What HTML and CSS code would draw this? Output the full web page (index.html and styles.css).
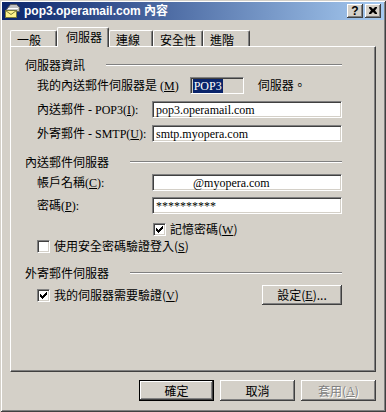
FILE: index.html
```html
<!DOCTYPE html>
<html lang="zh-Hant">
<head>
  <meta charset="UTF-8" />
  <title>pop3.operamail.com 內容</title>
  <link rel="stylesheet" href="styles.css">
</head>
<body>

<div class="window">
  <div class="titlebar">
    <svg class="title-icon" width="16" height="16" viewBox="0 0 16 16">
      <path d="M2.5 6.5 L6.5 1.5 H12.5 L15.5 4.5 V8.5 H2.5 Z" fill="#c0c0c0" stroke="#5a5a5a"/>
      <path d="M4 5.5 H14" stroke="#ffffff"/>
      <rect x="1.5" y="7.5" width="11" height="7" fill="#fff38a" stroke="#7a7a3a"/>
      <path d="M1.5 7.5 L7 11.5 L12.5 7.5" fill="none" stroke="#7a7a3a"/>
    </svg>
    <span class="title-text">pop3.operamail.com 內容</span>
    <div class="cap-btns">
      <span class="cap-btn help">?</span>
      <span class="cap-btn">
        <svg width="8" height="7" viewBox="0 0 8 7">
          <path d="M0 0h2l2 2 2-2h2v1l-2 2.5 2 2.5v1h-2l-2-2-2 2h-2v-1l2-2.5-2-2.5z" fill="#000"/>
        </svg>
      </span>
    </div>
  </div>

  <div class="tabs">
    <div class="tab w47">一般</div>
    <div class="tab selected">伺服器</div>
    <div class="tab w44">連線</div>
    <div class="tab w50">安全性</div>
    <div class="tab w47">進階</div>
  </div>

  <div class="panel">
    <div class="group-head">
      <span>伺服器資訊</span>
      <span class="etch"></span>
    </div>
    <div class="row r1">
      <span class="text">我的內送郵件伺服器是 (<u>M</u>)</span>
      <span class="readonly"><span class="sel">POP3</span></span>
      <span class="text after">伺服器。</span>
    </div>
    <div class="row r2">
      <span class="label">內送郵件 - POP3(<u>I</u>):</span>
      <div class="edit">pop3.operamail.com</div>
    </div>
    <div class="row r2">
      <span class="label">外寄郵件 - SMTP(<u>U</u>):</span>
      <div class="edit">smtp.myopera.com</div>
    </div>

    <div class="group-head g2">
      <span>內送郵件伺服器</span>
      <span class="etch"></span>
    </div>
    <div class="row r4">
      <span class="label">帳戶名稱(<u>C</u>):</span>
      <div class="edit user">@myopera.com</div>
    </div>
    <div class="row r5">
      <span class="label">密碼(<u>P</u>):</span>
      <div class="edit">**********</div>
    </div>
    <div class="check-row remember">
      <span class="box checked"></span>
      <span>記憶密碼(<u>W</u>)</span>
    </div>
    <div class="check-row spa">
      <span class="box"></span>
      <span>使用安全密碼驗證登入(<u>S</u>)</span>
    </div>

    <div class="group-head g2">
      <span>外寄郵件伺服器</span>
      <span class="etch"></span>
    </div>
    <div class="check-row auth">
      <span class="box checked"></span>
      <span>我的伺服器需要驗證(<u>V</u>)</span>
      <span class="btn settings">設定(<u>E</u>)...</span>
    </div>
  </div>

  <div class="actions">
    <span class="btn default">確定</span>
    <span class="btn">取消</span>
    <span class="btn disabled">套用(<u>A</u>)</span>
  </div>
</div>

</body>
</html>
```

FILE: styles.css
```css
:root {
  --face: #d4d0c8;
  --shadow: #808080;
  --dark: #404040;
  --light: #ffffff;
}

* {
  box-sizing: border-box;
}

body {
  margin: 0;
  background: var(--face);
  font-family: "Liberation Serif", "Noto Sans CJK TC", serif;
  font-size: 12px;
  line-height: 14px;
  color: #000;
}

u {
  text-decoration: underline;
  text-underline-offset: 1px;
}

.window {
  width: 386px;
  height: 412px;
  padding: 2px;
  background: var(--face);
  box-shadow: inset 1px 1px var(--face), inset -1px -1px var(--dark),
              inset 2px 2px var(--light), inset -2px -2px var(--shadow);
  display: flex;
  flex-direction: column;
}

/* caption */
.titlebar {
  height: 18px;
  background: linear-gradient(to right, #0a246a, #a6caf0);
  display: flex;
  align-items: center;
  color: #fff;
}

.title-icon {
  margin-left: 2px;
  flex: none;
}

.title-text {
  flex: 1;
  margin-left: 4px;
  font-family: "Liberation Sans", "Noto Sans CJK TC", sans-serif;
  font-weight: bold;
  font-size: 12px;
}

.cap-btns {
  display: flex;
  gap: 2px;
  margin-right: 3px;
}

.cap-btn {
  width: 16px;
  height: 14px;
  background: var(--face);
  box-shadow: inset -1px -1px var(--dark), inset 1px 1px var(--light),
              inset -2px -2px var(--shadow);
  display: flex;
  align-items: center;
  justify-content: center;
  color: #000;
}

.cap-btn svg {
  margin-top: -1px;
}

.cap-btn.help {
  font-family: "Liberation Sans", sans-serif;
  font-weight: bold;
  font-size: 12px;
  line-height: 12px;
}

/* tabs */
.tabs {
  display: flex;
  align-items: flex-end;
  height: 19px;
  margin: 7px 0 0 8px;
  position: relative;
  z-index: 1;
}

.tab {
  height: 16px;
  padding: 2px 0 0 6px;
  background: var(--face);
  border-top: 1px solid var(--light);
  border-left: 1px solid var(--light);
  border-right: 1px solid var(--dark);
  box-shadow: inset -1px 0 var(--shadow);
  border-radius: 2px 2px 0 0;
  font-family: "Noto Sans CJK TC", sans-serif;
}

.tab.w47 { width: 47px; }
.tab.w44 { width: 44px; }
.tab.w50 { width: 50px; }

.tab.selected {
  width: 52px;
  height: 20px;
  margin-bottom: -1px;
  padding: 2px 0 0 8px;
}

/* property page */
.panel {
  height: 326px;
  margin: 0 8px;
  padding: 11px 33px 0 14px;
  border-top: 1px solid var(--light);
  border-left: 1px solid var(--light);
  border-right: 1px solid var(--dark);
  border-bottom: 1px solid var(--dark);
  box-shadow: inset -1px -1px var(--shadow);
}

.group-head {
  display: flex;
  align-items: center;
  gap: 21px;
  height: 14px;
  font-family: "Noto Sans CJK TC", sans-serif;
}

.group-head.g2 {
  margin-top: 13px;
}

.etch {
  flex: 1;
  height: 2px;
  border-top: 1px solid var(--shadow);
  border-bottom: 1px solid var(--light);
}

.row {
  display: flex;
  align-items: center;
  height: 17px;
  padding-left: 12px;
}

.row.r1 { margin-top: 5px; }
.row.r2 { margin-top: 7px; }
.row.r4 { margin-top: 5px; }
.row.r5 { margin-top: 6px; }

.label {
  width: 115px;
  flex: none;
}

.text.after {
  margin-left: 14px;
}

.edit,
.readonly {
  height: 17px;
  padding: 1px 0 0 3px;
  border-top: 1px solid var(--shadow);
  border-left: 1px solid var(--shadow);
  border-right: 1px solid var(--light);
  border-bottom: 1px solid var(--light);
  box-shadow: inset 1px 1px var(--dark), inset -1px -1px var(--face);
  white-space: pre;
}

.edit {
  width: 190px;
  background: #fff;
}

.edit.user {
  padding-left: 40px;
}

.readonly {
  width: 54px;
  margin-left: 11px;
  background: var(--face);
  padding-left: 2px;
}

.sel {
  background: #0a246a;
  color: #fff;
  padding: 0 1px;
}

/* checkboxes */
.check-row {
  display: flex;
  align-items: center;
  gap: 4px;
  height: 13px;
  padding-left: 12px;
  font-family: "Noto Sans CJK TC", sans-serif;
}

.check-row u {
  font-family: "Liberation Serif", serif;
}

.check-row.remember {
  margin-top: 9px;
  padding-left: 128px;
}

.check-row.spa {
  margin-top: 4px;
}

.check-row.auth {
  height: 20px;
  margin-top: 5px;
}

.box {
  width: 13px;
  height: 13px;
  flex: none;
  background: #fff;
  border-top: 1px solid var(--shadow);
  border-left: 1px solid var(--shadow);
  border-right: 1px solid var(--light);
  border-bottom: 1px solid var(--light);
  box-shadow: inset 1px 1px var(--dark), inset -1px -1px var(--face);
}

.box.checked {
  background: #fff url("data:image/svg+xml,%3Csvg xmlns='http://www.w3.org/2000/svg' width='11' height='11'%3E%3Cpath d='M8 2h1v1h-1zM7 3h2v1h-2zM2 4h1v1h-1zM6 4h3v1h-3zM2 5h2v1h-2zM5 5h3v1h-3zM2 6h5v1h-5zM3 7h3v1h-3zM4 8h1v1h-1z' fill='%23000'/%3E%3C/svg%3E") no-repeat 0 0;
}

/* buttons */
.btn {
  width: 75px;
  height: 21px;
  display: flex;
  align-items: center;
  justify-content: center;
  background: var(--face);
  box-shadow: inset -1px -1px var(--dark), inset 1px 1px var(--light),
              inset -2px -2px var(--shadow);
  font-family: "Noto Sans CJK TC", sans-serif;
}

.btn u {
  font-family: "Liberation Serif", serif;
}

.btn.settings {
  width: 80px;
  height: 20px;
  margin-left: auto;
}

.btn.default {
  border: 1px solid #000;
}

.btn.disabled {
  color: var(--shadow);
  text-shadow: 1px 1px var(--light);
}

.actions {
  display: flex;
  justify-content: flex-end;
  gap: 6px;
  margin: 8px 8px 0 0;
}
```
